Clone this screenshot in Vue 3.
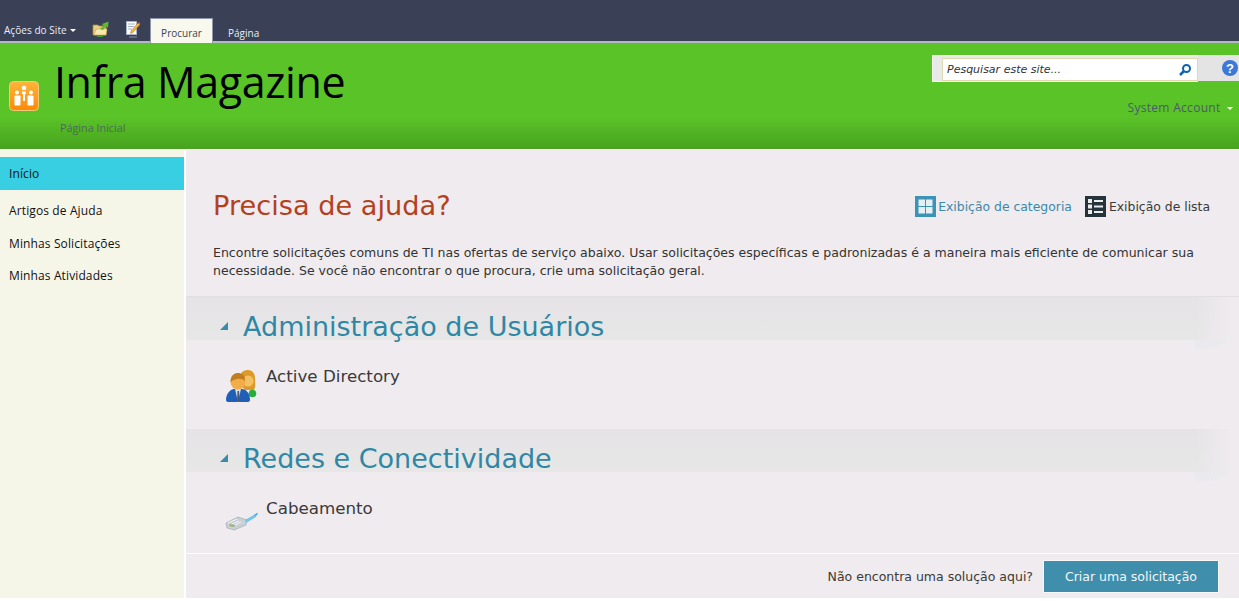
<template>
  <div class="page">
    <div class="ribbon">
      <div class="ribbon-item actions">Ações do Site <span class="caret"></span></div>
      <svg class="rib-icon folder" width="18" height="17" viewBox="0 0 18 17">
        <path d="M1 5h5l1 1h7v9H1z" fill="#e9cf83" stroke="#a98a3a" stroke-width=".8" />
        <path d="M2 15l2-6h11l-1 6z" fill="#f8e9ae" stroke="#c9a24a" stroke-width=".6" />
        <path d="M8 9l3.500-3.500-1.500-1.500L16.500 1.500 16 8l-1.700-1.700L11 10z" fill="#5fb82e" />
        <path d="M5 16.500h6" stroke="#3f9e3a" stroke-width="1" />
      </svg>
      <svg class="rib-icon edit" width="16" height="18" viewBox="0 0 16 18">
        <rect x="1.500" y="1.500" width="10" height="13" fill="#fdfdfd" stroke="#a8b2c8" />
        <path d="M3 4h7M3 6.500h6M3 9h4" stroke="#8d9dbd" stroke-width=".8" />
        <path d="M6 11l7-8 2 1.500-7 8-2.500 1z" fill="#f0b93c" stroke="#b5702a" stroke-width=".5" />
        <path d="M13 3l1-1 1.500 1.200-.8 1.200z" fill="#d8503a" />
        <path d="M4 17h8" stroke="#8c8f99" stroke-width="1" />
      </svg>
      <div class="tab active">Procurar</div>
      <div class="tab">Página</div>
    </div>

    <header class="banner">
      <div class="logo">
        <svg width="30" height="30" viewBox="0 0 30 30">
          <defs>
            <linearGradient id="lg" x1="0" y1="0" x2="0" y2="1">
              <stop offset="0" stop-color="#ffb53c" />
              <stop offset="1" stop-color="#fb8a08" />
            </linearGradient>
          </defs>
          <rect x=".5" y=".5" width="29" height="29" rx="4" fill="url(#lg)" stroke="#f7c877" />
          <circle cx="15" cy="7" r="2.300" fill="#fff" />
          <circle cx="8" cy="11.500" r="2" fill="#fff" />
          <circle cx="22" cy="11.500" r="2" fill="#fff" />
          <rect x="5.500" y="14.500" width="6" height="10" rx="1" fill="#fff" />
          <rect x="18.500" y="14.500" width="6" height="10" rx="1" fill="#fff" />
          <path d="M13 10.500h4v2.500h-1v7h-2v-7h-1z" fill="#fff" />
        </svg>
      </div>
      <div class="brand">
        <h1>Infra Magazine</h1>
        <div class="home-link">Página Inicial</div>
      </div>
      <div class="tools">
        <div class="search-row">
          <div class="search">
            <div class="search-box">
              <span>Pesquisar este site...</span>
              <svg width="14" height="14" viewBox="0 0 14 14">
                <circle cx="8.500" cy="5.500" r="3.500" fill="none" stroke="#0f62b5" stroke-width="2" />
                <path d="M6 8l-4 4" stroke="#0f62b5" stroke-width="2.500" />
              </svg>
            </div>
          </div>
          <div class="help">?</div>
        </div>
        <div class="account">System Account <span class="caret"></span></div>
      </div>
    </header>

    <div class="body">
      <nav class="side">
        <div class="side-current">Início</div>
        <div v-for="link in links" :key="link" class="side-link">{{ link }}</div>
      </nav>

      <main class="main">
        <div class="title-row">
          <h2>Precisa de ajuda?</h2>
          <div class="views">
            <div class="view cat">
              <svg width="21" height="21" viewBox="0 0 21 21">
                <rect width="21" height="21" fill="#3c93b5" />
                <rect x="3.500" y="3.500" width="6.500" height="6.500" fill="#e6f0f4" />
                <rect x="11" y="3.500" width="6.500" height="6.500" fill="#e6f0f4" />
                <rect x="3.500" y="11" width="6.500" height="6.500" fill="#e6f0f4" />
                <rect x="11" y="11" width="6.500" height="6.500" fill="#e6f0f4" />
              </svg>
              Exibição de categoria
            </div>
            <div class="view list">
              <svg width="21" height="21" viewBox="0 0 21 21">
                <rect width="21" height="21" fill="#27333a" />
                <rect x="3" y="3" width="4" height="4" fill="#e9eded" />
                <rect x="3" y="8.500" width="4" height="4" fill="#e9eded" />
                <rect x="3" y="14" width="4" height="4" fill="#e9eded" />
                <rect x="9" y="4" width="9" height="2" fill="#e9eded" />
                <rect x="9" y="9.500" width="9" height="2" fill="#e9eded" />
                <rect x="9" y="15" width="9" height="2" fill="#e9eded" />
              </svg>
              Exibição de lista
            </div>
          </div>
        </div>
        <p class="intro">Encontre solicitações comuns de TI nas ofertas de serviço abaixo. Usar solicitações específicas e padronizadas é a maneira mais eficiente de comunicar sua necessidade. Se você não encontrar o que procura, crie uma solicitação geral.</p>

        <section v-for="(group, i) in groups" :key="group.title" class="group" :class="{ first: i === 0 }">
          <div class="group-head">
            <span class="tri"></span>
            <h3>{{ group.title }}</h3>
            <svg class="fade" width="34" height="10" viewBox="0 0 34 10">
              <path d="M0 0h34l-2 3-1-1-2 3-1-2-2 4-1-3-2 5-2-4-2 5-2-4-2 4-2-3-2 3-2-3-2 3-2-2-2 2z" fill="#e9e9ee" />
            </svg>
          </div>
          <div class="offer">
            <svg v-if="group.icon === 'users'" class="offer-icon" width="34" height="34" viewBox="0 0 34 34">
              <path d="M15 9c0-6 4-8 8-8s7 3 7 8c0 4 1 9-1 12h-9c-3-3-5-7-5-12z" fill="#dc9a28" />
              <circle cx="23" cy="12" r="5.500" fill="#f4c064" />
              <circle cx="27.500" cy="24.500" r="3.800" fill="#27ae38" />
              <path d="M1 31c0-7 5-11 8-11h8c4 0 8 4 8 11 0 1-1 2-2 2H3c-1 0-2-1-2-2z" fill="#1f5fb8" />
              <path d="M10 20l3 13 3-13z" fill="#d6dde8" />
              <path d="M12.500 22h1.500l1 10h-3z" fill="#4a5870" />
              <circle cx="13" cy="13" r="7.500" fill="#f3ad48" />
              <path d="M5.500 13c0-7 4-9 7.500-9s7.500 2 7 8c-3-3-9-3-14.500 1z" fill="#c07c1e" />
            </svg>
            <svg v-else class="offer-icon cable" width="34" height="20" viewBox="0 0 34 20">
              <path d="M1 12l12-6 9 3-1 5-12 5-7-2z" fill="#c9d0d6" stroke="#98a3ac" stroke-width=".6" />
              <path d="M3 12l9-4M5 14l9-4M8 15l8-4" stroke="#f2f5f6" stroke-width="1" />
              <path d="M4 15l5 1 1-2-5-1z" fill="#9bb06a" />
              <path d="M20 9l7-4 5-2-1 3-10 6z" fill="#74c6e8" />
              <path d="M28 4.500l5-3-1 2.500z" fill="#2f9ed8" />
            </svg>
            <span class="offer-name">{{ group.offer }}</span>
          </div>
        </section>

        <footer class="foot">
          <span>Não encontra uma solução aqui?</span>
          <button class="create">Criar uma solicitação</button>
        </footer>
      </main>
    </div>
  </div>
</template>

<script setup>
const links = ['Artigos de Ajuda', 'Minhas Solicitações', 'Minhas Atividades']

const groups = [
  { title: 'Administração de Usuários', offer: 'Active Directory', icon: 'users' },
  { title: 'Redes e Conectividade', offer: 'Cabeamento', icon: 'cable' }
]
</script>

<style>
html, body {
  margin: 0;
  background: #fff;
  overflow: hidden;
}
</style>

<style scoped>
.page {
  width: 1239px;
  height: 601px;
  overflow: hidden;
  font-family: "DejaVu Sans", sans-serif;
}

.ribbon {
  height: 41px;
  background: #3a4056;
  display: flex;
  align-items: flex-end;
  color: #e8eefa;
  font-family: "Open Sans", sans-serif;
  font-size: 10px;
  position: relative;
  z-index: 1;
}

.actions {
  margin-left: 4px;
  height: 18px;
  width: 82px;
  letter-spacing: .05px;
}

.caret {
  display: inline-block;
  vertical-align: 2px;
  margin-left: 1px;
  border: 3px solid transparent;
  border-top-color: #fff;
  border-bottom: 0;
}

.rib-icon {
  margin-bottom: 3px;
}

.folder {
  margin-left: 6px;
  margin-bottom: 4px;
}

.edit {
  margin-left: 15px;
  margin-bottom: 3px;
}

.tab.active {
  box-sizing: border-box;
  height: 25px;
  width: 63px;
  margin-left: 9px;
  margin-bottom: -2px;
  padding-top: 6px;
  background: #f8f8ec;
  border: 1px solid #8f97ab;
  border-bottom: 0;
  color: #3f4350;
  text-align: center;
  line-height: 16px;
}

.tab.active + .tab {
  margin-left: 15px;
  height: 16px;
  line-height: 16px;
}

.banner {
  height: 108px;
  box-sizing: border-box;
  border-top: 2px solid #b4b8c2;
  background: linear-gradient(#5ac328 0, #5ac328 70%, #47a21e 100%);
  display: flex;
}

.logo {
  margin: 38px 0 0 9px;
  height: 30px;
}

.brand {
  margin-left: 15px;
}

h1 {
  margin: 7px 0 0;
  font-family: "Open Sans", sans-serif;
  font-weight: 400;
  font-size: 43px;
  line-height: 64px;
  color: #000;
  letter-spacing: -.4px;
}

.home-link {
  margin: 7px 0 0 6px;
  font-family: "Open Sans", sans-serif;
  font-size: 10.800px;
  line-height: 14px;
  color: #4a6a58;
}

.tools {
  margin-left: auto;
}

.search-row {
  display: flex;
  margin-top: 12px;
}

.search {
  width: 266px;
  height: 27px;
  box-sizing: border-box;
  padding: 2px 0 0 9px;
  background: #e9e9e9;
  border: 1px solid #f6f6f6;
  border-right: 0;
}

.search-box {
  width: 256px;
  height: 23px;
  box-sizing: border-box;
  background: #fff;
  border: 1px solid #e0d8b0;
  padding: 0 5px 0 4px;
  display: flex;
  align-items: center;
  justify-content: space-between;
  font-size: 11px;
  font-style: italic;
  color: #333;
}

.help {
  width: 41px;
  height: 26px;
  background: #e4e4e4;
  font: 700 13px "Liberation Sans", sans-serif;
  color: #fff;
  display: flex;
  align-items: center;
  justify-content: center;
  padding-left: 23px;
  box-sizing: border-box;
  position: relative;
  z-index: 0;
}

.help::before {
  content: '';
  position: absolute;
  left: 24px;
  top: 5px;
  width: 16px;
  height: 16px;
  border-radius: 50%;
  background: #3b78d8;
  z-index: -1;
}

.account {
  margin-top: 18px;
  text-align: right;
  padding-right: 6px;
  font-family: "Open Sans", sans-serif;
  font-size: 12px;
  letter-spacing: .3px;
  line-height: 16px;
  color: #4a5a6e;
}

.account .caret {
  margin-left: 3px;
}

.body {
  display: flex;
  height: 449px;
  padding-top: 1px;
  box-sizing: border-box;
}

.side {
  width: 184px;
  background: #f6f6e8;
  padding-top: 7px;
  border-right: 2px solid #fff;
  font-family: "Open Sans", sans-serif;
  font-size: 12px;
  letter-spacing: .12px;
  color: #111;
}

.side-current {
  height: 33px;
  line-height: 33px;
  padding-left: 9px;
  background: #38cfe2;
  margin-bottom: 5px;
}

.side-link {
  height: 32.500px;
  line-height: 32.500px;
  padding-left: 9px;
}

.main {
  flex: 1;
  background: #efebef;
  min-width: 0;
}

.title-row {
  display: flex;
  justify-content: space-between;
  align-items: center;
  padding: 36px 29px 0 27px;
}

h2 {
  margin: 0;
  font-weight: 400;
  font-size: 27.200px;
  line-height: 40px;
  color: #b5401c;
}

.views {
  display: flex;
  gap: 13px;
}

.view {
  display: flex;
  align-items: center;
  gap: 3px;
  font-size: 12.400px;
}

.view.cat {
  gap: 2px;
  color: #3b8aa8;
}

.view.list {
  color: #3a3a3a;
}

.intro {
  margin: 18px 29px 0 27px;
  font-size: 12.530px;
  line-height: 18px;
  color: #333;
}

.group.first {
  margin-top: 16px;
  margin-bottom: 22px;
  border-top: 1px solid #e2dfe2;
}

.group-head {
  display: flex;
  align-items: flex-start;
  height: 43px;
  box-sizing: border-box;
  padding: 9px 0 0 34px;
  background:
    linear-gradient(90deg, rgba(239, 235, 239, 0) calc(100% - 44px), #efebef calc(100% - 6px)),
    linear-gradient(#e6e3e6, #e7e7e7);
  position: relative;
}

.tri {
  border-style: solid;
  border-width: 0 0 8px 8px;
  border-color: transparent transparent #3b8aa8 transparent;
  margin: 16px 15px 0 0;
}

h3 {
  margin: 0;
  font-weight: 400;
  font-size: 27px;
  line-height: 42px;
  color: #2f87a5;
}

.fade {
  position: absolute;
  right: 12px;
  top: 43px;
}

.offer {
  display: flex;
  align-items: flex-start;
  padding: 26px 0 0 39px;
  height: 41px;
}

.offer-icon {
  margin-top: 3px;
}

.offer-icon.cable {
  margin-top: 13px;
}

.offer-name {
  margin-left: 7px;
  font-size: 16.700px;
  line-height: 20px;
  color: #3a3a3a;
}

.foot {
  height: 45px;
  margin-top: 14px;
  box-sizing: border-box;
  border-top: 1px solid #fbfbfb;
  display: flex;
  justify-content: flex-end;
  align-items: center;
  padding-right: 20px;
  font-size: 12.500px;
  color: #3a3a3a;
}

.create {
  margin-left: 10px;
  width: 176px;
  height: 33px;
  border: 1px solid #f7f7f7;
  background: #3f8fac;
  color: #f2f8fa;
  font: 12.500px "DejaVu Sans", sans-serif;
  padding: 0;
}
</style>
